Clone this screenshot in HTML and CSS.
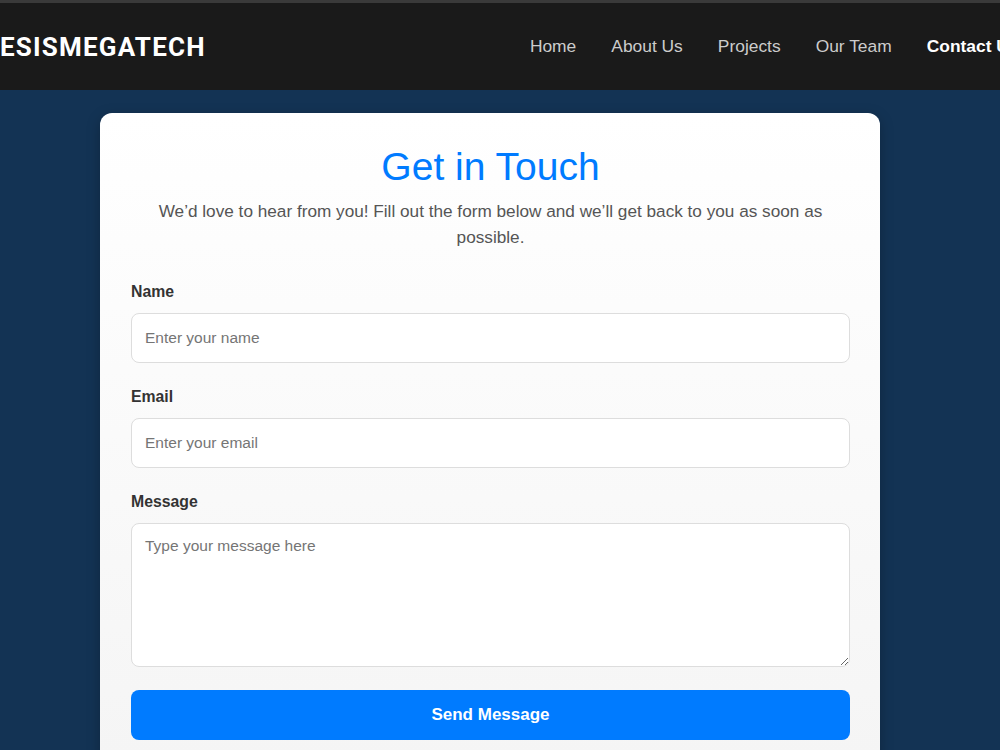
FILE: index.html
```html
<!DOCTYPE html>
<html lang="en">
<head>
<meta charset="utf-8">
<title>Contact Us</title>
<link rel="stylesheet" href="styles.css">
</head>
<body>
<header class="site-header">
  <div class="logo">ESISMEGATECH</div>
  <nav class="nav">
    <a href="#" class="nav-link">Home</a>
    <a href="#" class="nav-link">About Us</a>
    <a href="#" class="nav-link">Projects</a>
    <a href="#" class="nav-link">Our Team</a>
    <a href="#" class="nav-link active">Contact Us</a>
  </nav>
</header>
<main class="main">
  <section class="card">
    <h1 class="title">Get in Touch</h1>
    <p class="subtitle">We’d love to hear from you! Fill out the form below and we’ll get back to you as soon as possible.</p>
    <form class="form">
      <div class="group">
        <label class="label" for="name">Name</label>
        <input class="field" id="name" type="text" placeholder="Enter your name">
      </div>
      <div class="group">
        <label class="label" for="email">Email</label>
        <input class="field" id="email" type="email" placeholder="Enter your email">
      </div>
      <div class="group">
        <label class="label" for="message">Message</label>
        <textarea class="field area" id="message" placeholder="Type your message here"></textarea>
      </div>
      <button class="send" type="button">Send Message</button>
    </form>
  </section>
</main>
</body>
</html>
```

FILE: styles.css
```css
html, body {
  margin: 0;
  padding: 0;
}
body {
  background: #133354;
  font-family: "Liberation Sans", Arial, sans-serif;
  overflow: hidden;
  width: 1000px;
  height: 750px;
}
.site-header {
  width: 1036px;
  height: 87px;
  border-top: 3px solid #3a3a3a;
  background: #1a1a1a;
  display: flex;
  align-items: center;
  box-sizing: content-box;
}
.logo {
  font-family: Roboto, "Liberation Sans", sans-serif;
  font-weight: 700;
  font-size: 26px;
  letter-spacing: 1.2px;
  color: #ffffff;
}
.nav {
  margin-left: auto;
  display: flex;
}
.nav-link {
  color: #cccccc;
  text-decoration: none;
  font-size: 17.4px;
  padding: 0 17.5px;
}
.nav-link:first-child {
  padding-left: 19.5px;
}
.nav-link.active {
  color: #ffffff;
  font-weight: 700;
}
.main {
  padding-top: 23px;
}
.card {
  width: 719px;
  margin-left: 100px;
  padding: 30px 30px 40px 31px;
  border-radius: 12px;
  background: linear-gradient(to bottom, #ffffff 0%, #f3f3f3 100%);
  box-shadow: 0 4px 14px rgba(0, 0, 0, 0.25);
  min-height: 700px;
}
.title {
  margin: 0 0 7px;
  text-align: center;
  color: #007bff;
  font-weight: 400;
  font-size: 39px;
  line-height: 48px;
}
.subtitle {
  margin: 0 0 31px;
  text-align: center;
  color: #555555;
  font-size: 17.2px;
  line-height: 26px;
}
.form {
  display: flex;
  flex-direction: column;
}
.group {
  margin-bottom: 23px;
}
.label {
  display: block;
  font-weight: 700;
  font-size: 15.8px;
  line-height: 22px;
  color: #333333;
  margin-bottom: 10px;
}
.field {
  display: block;
  width: 100%;
  box-sizing: border-box;
  height: 50px;
  padding: 12px 13px;
  border: 1px solid #dddddd;
  border-radius: 8px;
  background: #ffffff;
  font-family: "Liberation Sans", Arial, sans-serif;
  font-size: 15.5px;
  color: #333333;
}
.field::placeholder {
  color: #757575;
}
.area {
  height: 144px;
  padding: 13px 13px;
  resize: vertical;
}
.send {
  height: 50px;
  width: 100%;
  border: none;
  border-radius: 8px;
  background: #007bff;
  color: #ffffff;
  font-family: "Liberation Sans", Arial, sans-serif;
  font-weight: 700;
  font-size: 17px;
}
```
